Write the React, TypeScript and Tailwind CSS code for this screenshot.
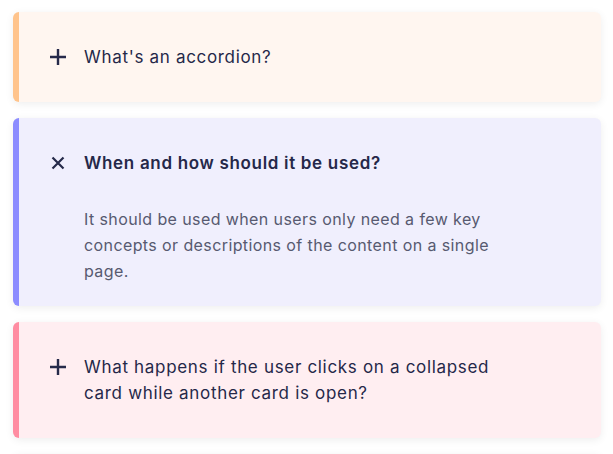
import { useState } from 'react'

const items = [
  {
    title: "What's an accordion?",
    body: 'An accordion is a vertically stacked list of headers that can be clicked to reveal or hide the content associated with them.',
    border: 'border-[#ffc48c]',
    bg: 'bg-[#fff6f0]',
  },
  {
    title: 'When and how should it be used?',
    body: 'It should be used when users only need a few key concepts or descriptions of the content on a single page.',
    border: 'border-[#8c8cff]',
    bg: 'bg-[#f0effd]',
  },
  {
    title: 'What happens if the user clicks on a collapsed card while another card is open?',
    body: 'The open card collapses and the clicked card expands, so only one card is open at a time.',
    border: 'border-[#ff8da2]',
    bg: 'bg-[#ffeef1]',
  },
  {
    title: 'Can more than one card be open at once?',
    body: 'Usually not, but it depends on what the page needs.',
    border: 'border-[#8cc8ff]',
    bg: 'bg-[#eff8ff]',
  },
]

function PlusIcon() {
  return (
    <svg width="16" height="16" viewBox="0 0 16 16" className="text-[#262a4a]">
      <path d="M8 0v16M0 8h16" stroke="currentColor" strokeWidth="2.4" />
    </svg>
  )
}

function CloseIcon() {
  return (
    <svg width="16" height="16" viewBox="0 0 16 16" className="text-[#262a4a]">
      <path d="M2.5 2.5l11 11M13.5 2.5l-11 11" stroke="currentColor" strokeWidth="2.2" />
    </svg>
  )
}

export default function App() {
  const [open, setOpen] = useState(1)

  return (
    <div className="min-h-screen bg-white pl-[13px] pr-[12px] pt-3 pb-4 font-['Inter',sans-serif]">
      <div className="flex flex-col gap-4">
        {items.map((item, index) => (
          <div
            key={index}
            className={`rounded-md border-l-[6px] ${item.border} ${item.bg} shadow-[0_2px_8px_rgba(0,0,0,0.07)]`}
          >
            <button
              onClick={() => setOpen(open === index ? -1 : index)}
              className="flex w-full items-start gap-[18px] pl-[31px] pr-8 py-8 text-left"
            >
              <span className="flex h-[25px] w-4 shrink-0 items-center justify-center">
                {open === index ? <CloseIcon /> : <PlusIcon />}
              </span>
              <span
                className={`max-w-[430px] text-[17px] leading-[26px] tracking-[0.04em] text-[#252849] ${
                  open === index ? 'font-semibold' : 'font-normal'
                }`}
              >
                {item.title}
              </span>
            </button>
            {open === index && (
              <p className="-mt-[2px] max-w-[490px] pb-[22px] pl-[65px] pr-4 text-[16px] leading-[26px] tracking-[0.025em] text-[#575a70]">
                {item.body}
              </p>
            )}
          </div>
        ))}
      </div>
    </div>
  )
}
